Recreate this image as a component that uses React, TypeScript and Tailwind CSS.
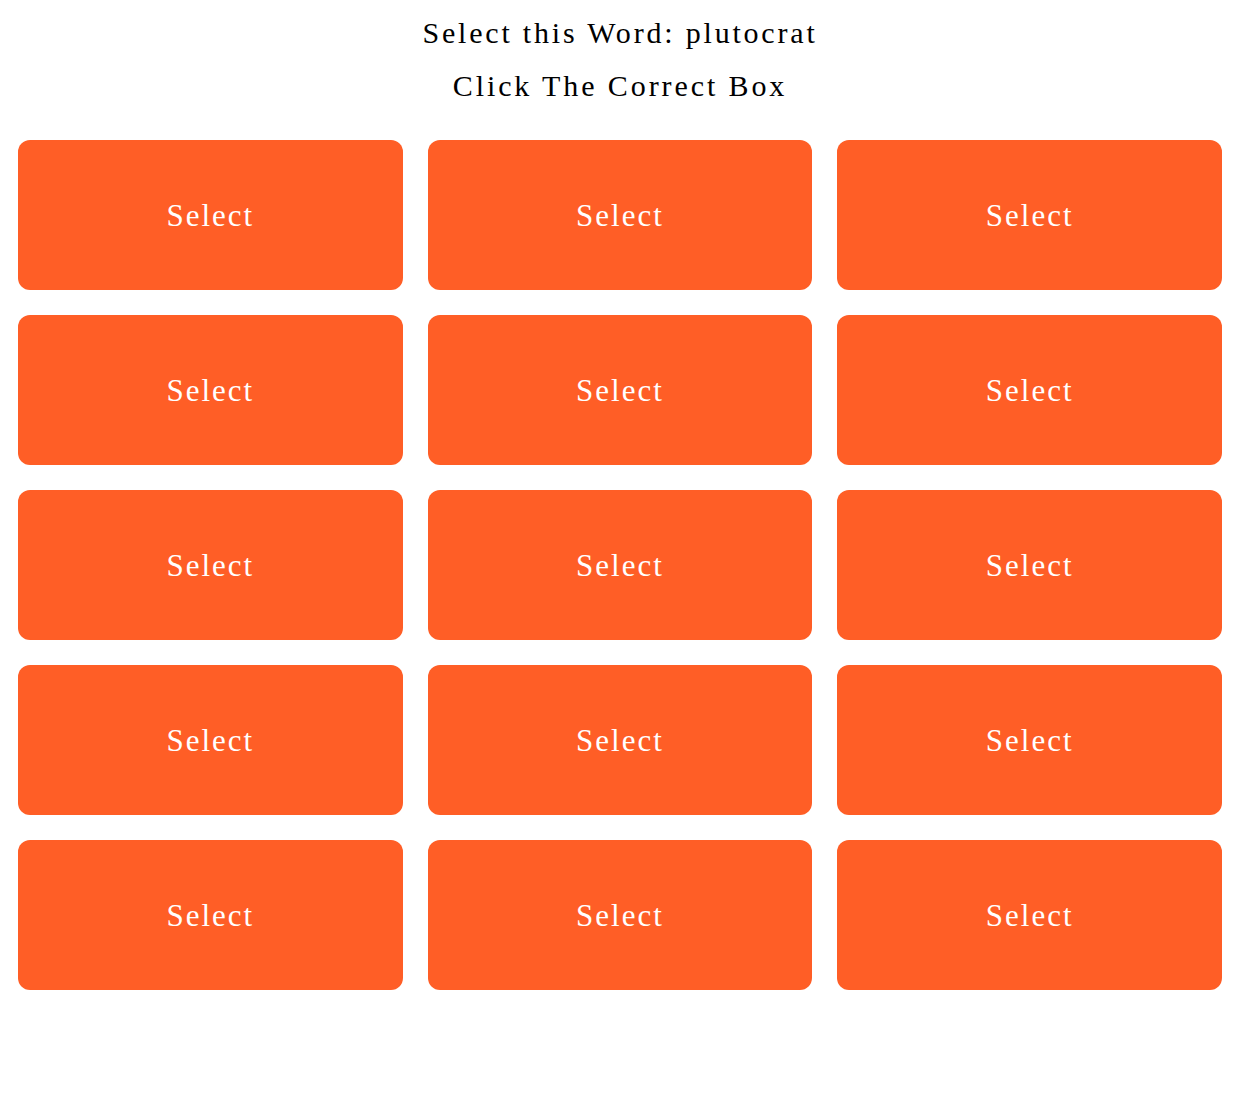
export default function App() {
  const boxes = Array.from({ length: 15 }, (_, i) => i);

  return (
    <div className="min-h-screen bg-white font-['Liberation_Serif',serif]">
      <div className="ml-[18px] w-[1204px] pt-[12px]">
        <h2 className="text-center text-[30px] leading-[42px] tracking-[2.8px] text-black">
          Select this Word: plutocrat
        </h2>
        <h3 className="mt-[11px] text-center text-[30px] leading-[42px] tracking-[2.9px] text-black">
          Click The Correct Box
        </h3>
        <div className="mt-[33px] grid grid-cols-3 gap-[25px]">
          {boxes.map((i) => (
            <button
              key={i}
              type="button"
              className="flex h-[150px] items-center justify-center rounded-[12px] bg-[#ff5e26] pt-[2px] text-[31px] tracking-[2px] text-white"
            >
              Select
            </button>
          ))}
        </div>
      </div>
    </div>
  );
}
